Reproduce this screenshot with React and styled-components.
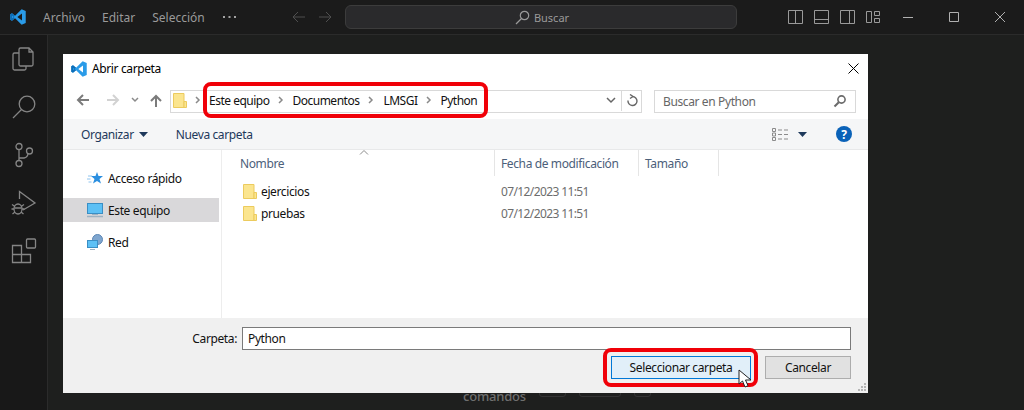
import styled, { createGlobalStyle } from "styled-components";

const GlobalStyle = createGlobalStyle`
  html, body { margin: 0; padding: 0; background: #1e1f1e; }
  * { box-sizing: border-box; }
`;

const Page = styled.div`
  position: relative;
  width: 1024px;
  height: 410px;
  overflow: hidden;
  background: #1e1f1e;
  font-family: "Noto Sans", "Open Sans", sans-serif;
  font-size: 12px;
`;

/* ---------- VS Code behind the dialog ---------- */
const TitleBar = styled.header`
  display: flex;
  align-items: center;
  height: 35px;
  padding-left: 10px;
  background: #1b1b1b;
  border-bottom: 1px solid #2b2b2b;
  color: #a3a3a3;
`;
const MenuList = styled.nav`
  display: flex;
  align-items: center;
  gap: 17px;
  margin-left: 17px;
  width: 249px;
`;
const MenuItem = styled.span`
  font-size: 12px;
  color: #9a9a9a;
`;
const HistoryArrows = styled.div`
  display: flex;
  gap: 14px;
  width: 53px;
  color: #4f4f4f;
`;
const CommandCenter = styled.div`
  display: flex;
  align-items: center;
  justify-content: center;
  gap: 4px;
  width: 392px;
  height: 24px;
  padding-left: 2px;
  background: #2a2a2c;
  border: 1px solid #3c3c3c;
  border-radius: 6px;
  color: #9a9a9a;
  font-size: 11px;
`;
const LayoutIcons = styled.div`
  display: flex;
  gap: 11px;
  margin-left: 51px;
  color: #9a9a9a;
`;
const WindowControls = styled.div`
  display: flex;
  gap: 36px;
  margin-left: 23px;
  color: #b0b0b0;
`;
const Workspace = styled.div`
  display: flex;
  height: 375px;
`;
const ActivityBar = styled.aside`
  display: flex;
  flex-direction: column;
  width: 48px;
  background: #181818;
  border-right: 1px solid #2b2b2b;
  color: #858585;
`;
const ActivityItem = styled.div`
  display: flex;
  align-items: center;
  justify-content: center;
  height: 48px;
`;
const Editor = styled.main`
  flex: 1;
  display: flex;
  padding: 354px 0 0 415px;
`;
const Hint = styled.div`
  display: flex;
  gap: 13px;
  color: #6f6f6f;
  font-size: 13px;
  font-weight: 500;
  line-height: 14px;
  letter-spacing: -0.2px;
`;
const Key = styled.span`
  width: ${(p) => p.$w}px;
  height: 16px;
  margin-top: -8px;
  border: 1px solid #333;
  border-radius: 3px;
`;

/* ---------- dialog ---------- */
const Dialog = styled.section`
  position: absolute;
  left: 63px;
  top: 54px;
  display: flex;
  flex-direction: column;
  width: 805px;
  height: 339px;
  background: #fff;
  color: #000;
  letter-spacing: -0.38px;
`;
const DialogTitle = styled.div`
  display: flex;
  align-items: center;
  gap: 5px;
  height: 29px;
  padding: 0 9px 0 8px;
  font-size: 12px;
`;
const DialogClose = styled.span`
  display: flex;
  margin-left: auto;
`;
const NavRow = styled.div`
  display: flex;
  align-items: center;
  height: 36px;
  padding: 0 0 2px 12px;
`;
const NavButton = styled.span`
  display: flex;
  justify-content: center;
  flex: none;
  width: ${(p) => p.$w}px;
  margin-left: ${(p) => p.$ml || 0}px;
  color: ${(p) => p.$color};
`;
const AddressBox = styled.div`
  display: flex;
  align-items: center;
  flex: none;
  width: 472px;
  height: 23px;
  margin-left: 7px;
  margin-top: 2px;
  border: 1px solid #d9d9d9;
  padding: 0 0 2px 2px;
`;
const Crumb = styled.span`
  font-size: 12px;
  color: #111;
  letter-spacing: -0.5px;
`;
const CrumbSep = styled.span`
  display: flex;
  justify-content: center;
  width: ${(p) => p.$w}px;
  color: #8a8a8a;
`;
const AddressTools = styled.div`
  display: flex;
  align-items: center;
  margin-left: auto;
  height: 100%;
  color: #666;
`;
const RefreshButton = styled.span`
  display: flex;
  align-items: center;
  justify-content: center;
  width: 20px;
  height: 21px;
  margin-left: 5px;
  border-left: 1px solid #d9d9d9;
`;
const SearchBox = styled.div`
  display: flex;
  align-items: center;
  justify-content: space-between;
  width: 202px;
  height: 23px;
  margin-left: 12px;
  margin-top: 2px;
  padding: 0 8px;
  border: 1px solid #d9d9d9;
  color: #666;
  font-size: 12px;
`;
const Toolbar = styled.div`
  display: flex;
  align-items: center;
  height: 31px;
  padding-left: 18px;
  background: #f5f6f7;
  border-bottom: 1px solid #e8e9ea;
  color: #1e395b;
  font-size: 12px;
`;
const ToolButton = styled.span`
  display: flex;
  align-items: center;
  gap: 5px;
  margin-right: 28px;
`;
const ToolbarRight = styled.div`
  display: flex;
  align-items: center;
  margin-left: auto;
  padding-right: 16px;
  gap: 9px;
`;
const HelpBadge = styled.span`
  display: flex;
  align-items: center;
  justify-content: center;
  width: 16px;
  height: 16px;
  margin-left: 20px;
  border-radius: 50%;
  background: #0a62b8;
  color: #fff;
  font-size: 12px;
  font-weight: 700;
`;
const Body = styled.div`
  display: flex;
  height: 168px;
`;
const Sidebar = styled.div`
  display: flex;
  flex-direction: column;
  width: 159px;
  padding-top: 16px;
  border-right: 1px solid #ededed;
  gap: 8px;
`;
const SideItem = styled.div`
  display: flex;
  align-items: center;
  gap: 5px;
  width: 156px;
  height: 24px;
  padding-left: 24px;
  background: ${(p) => (p.$active ? "#d9d8da" : "transparent")};
  color: #111;
  font-size: 12px;
`;
const FileArea = styled.div`
  position: relative;
  flex: 1;
`;
const HeaderRow = styled.div`
  display: grid;
  grid-template-columns: 273px 144px 80px;
  height: 26px;
  margin-bottom: 4px;
`;
const HeaderCell = styled.div`
  display: flex;
  align-items: center;
  padding-left: ${(p) => p.$pad}px;
  border-right: 1px solid #e5e5e5;
  color: #4c607a;
  font-size: 12px;
`;
const SortCaret = styled.svg`
  position: absolute;
  left: 137px;
  top: 0;
`;
const FileRow = styled.div`
  display: grid;
  grid-template-columns: 273px 1fr;
  align-items: center;
  height: 22px;
`;
const FileName = styled.div`
  display: flex;
  align-items: center;
  gap: 4px;
  padding-left: 21px;
  color: #111;
  font-size: 12px;
`;
const FileDate = styled.div`
  padding-left: 6px;
  color: #6d6d6d;
  font-size: 12px;
  letter-spacing: -0.62px;
`;
const Footer = styled.div`
  display: flex;
  flex-direction: column;
  flex: 1;
  padding: 9px 17px 0 0;
  background: #f0f0f0;
`;
const FolderLine = styled.div`
  display: flex;
  align-items: center;
  justify-content: flex-end;
  gap: 5px;
  font-size: 12px;
  color: #111;
`;
const FolderInput = styled.div`
  display: flex;
  align-items: center;
  width: 609px;
  height: 23px;
  padding-left: 5px;
  background: #fff;
  border: 1px solid #7a7a7a;
`;
const ButtonLine = styled.div`
  display: flex;
  justify-content: flex-end;
  gap: 14px;
  margin-top: 6px;
`;
const DialogButton = styled.div`
  display: flex;
  align-items: center;
  justify-content: center;
  width: ${(p) => p.$w}px;
  height: 23px;
  background: ${(p) => (p.$primary ? "#e1eff9" : "#e1e1e1")};
  border: 1px solid ${(p) => (p.$primary ? "#0078d7" : "#adadad")};
  font-size: 12px;
  color: #111;
`;
const Grip = styled.svg`
  position: absolute;
  right: 1px;
  bottom: 1px;
`;
const Highlight = styled.div`
  position: absolute;
  left: ${(p) => p.$x}px;
  top: ${(p) => p.$y}px;
  width: ${(p) => p.$w}px;
  height: ${(p) => p.$h}px;
  border: 4px solid #f00008;
  border-radius: 8px;
`;
const Cursor = styled.svg`
  position: absolute;
  left: 738px;
  top: 369px;
`;

/* ---------- drawings ---------- */
const CodeLogo = ({ size = 16 }) => (
  <svg width={size} height={size} viewBox="0 0 24 24">
    <path
      fill="#2a9be8"
      fillRule="evenodd"
      d="M17.5.4 23.6 3v18l-6.1 2.6L7.6 14 3 17.6.4 16.2V7.8L3 6.4 7.6 10zM18 6.6 11 12l7 5.4z"
    />
    <path fill="#0d6eb8" d="M.4 7.8 3 6.4l4.6 3.6L5.2 12 3 10v4l2.2-2 2.4 2L3 17.6.4 16.2z" />
  </svg>
);
const Line = ({ d, w = 16, h = 16, sw = 1, fill = "none" }) => (
  <svg width={w} height={h} viewBox={`0 0 ${w} ${h}`} fill={fill} stroke="currentColor" strokeWidth={sw}>
    <path d={d} />
  </svg>
);
const Activity = ({ children }) => (
  <ActivityItem>
    <svg width="26" height="26" viewBox="0 0 26 26" fill="none" stroke="currentColor" strokeWidth="1.3">
      {children}
    </svg>
  </ActivityItem>
);
const FolderIcon = ({ w = 14, h = 16 }) => (
  <svg width={w} height={h} viewBox="0 0 14 16">
    <path d="M.5 1.5h10.5v14H.5z" fill="#fbe58f" stroke="#eccb5e" />
    <path d="M11 9.5h2.500v6H11z" fill="#fbe58f" stroke="#eccb5e" />
  </svg>
);
const SearchGlass = () => (
  <svg width="14" height="14" viewBox="0 0 14 14" fill="none" stroke="#6a6a6a">
    <circle cx="8.5" cy="5.5" r="3.6" strokeWidth="1.6" />
    <path d="M5.8 8.2 1.5 12.5" strokeWidth="2" />
  </svg>
);
const Sep = ({ w }) => (
  <CrumbSep $w={w}>
    <svg width="6" height="8" viewBox="0 0 6 8" fill="none" stroke="currentColor" strokeWidth="1.5">
      <path d="m1 1 3 3-3 3" />
    </svg>
  </CrumbSep>
);
const Caret = ({ color = "#1e395b" }) => (
  <svg width="9" height="5" viewBox="0 0 9 5">
    <path d="M0 0h9L4.5 5z" fill={color} />
  </svg>
);

export default function App() {
  return (
    <Page>
      <GlobalStyle />
      <TitleBar>
        <CodeLogo />
        <MenuList>
          <MenuItem>Archivo</MenuItem>
          <MenuItem>Editar</MenuItem>
          <MenuItem>Selección</MenuItem>
          <Line w={14} h={4} sw={2} d="M1 2h2m3.500 0h2m3.500 0h2" />
        </MenuList>
        <HistoryArrows>
          <Line w={13} h={12} d="M13 6H1m5-5L1 6l5 5" />
          <Line w={13} h={12} d="M0 6h12M7 1l5 5-5 5" />
        </HistoryArrows>
        <CommandCenter>
          <svg width="15" height="15" viewBox="0 0 15 15" fill="none" stroke="currentColor" strokeWidth="1.2">
            <circle cx="9.500" cy="5.500" r="4.200" />
            <path d="M6.500 8.500 1 14" />
          </svg>
          Buscar
        </CommandCenter>
        <LayoutIcons>
          <Line w={15} h={14} d="M.5.5h14v13H.5zM7.500.5v13" />
          <Line w={15} h={14} d="M.5.5h14v13H.5zM.5 9.500h14" />
          <Line w={15} h={14} d="M.5.5h14v13H.5zM9.500.5v13" />
          <Line w={14} h={14} d="M.5 1.500h5v11h-5zM8.500 1.500h5v4h-5zM8.500 8.500h5v4h-5z" />
        </LayoutIcons>
        <WindowControls>
          <Line w={10} h={10} d="M0 5.500h10" />
          <Line w={10} h={10} d="M.5.5h9v9h-9z" />
          <Line w={10} h={10} d="m0 0 10 10M10 0 0 10" />
        </WindowControls>
      </TitleBar>
      <Workspace>
        <ActivityBar>
          <Activity>
            <path d="M8 7H3.500A1.500 1.500 0 0 0 2 8.500v14A1.500 1.500 0 0 0 3.500 24h10a1.500 1.500 0 0 0 1.500-1.500V20" />
            <path d="M9.500 2H18l4 4v12.500a1.500 1.500 0 0 1-1.500 1.500h-11A1.500 1.500 0 0 1 8 18.500v-15A1.500 1.500 0 0 1 9.500 2zM18 2v4h4" />
          </Activity>
          <Activity>
            <circle cx="16" cy="10" r="7.800" />
            <path d="M10.500 15.500 2 24" />
          </Activity>
          <Activity>
            <circle cx="8" cy="4.500" r="3" />
            <circle cx="8" cy="21.500" r="3" />
            <circle cx="18.500" cy="9" r="3" />
            <path d="M8 7.500v11M8 16h5a5 5 0 0 0 4-4.500" />
          </Activity>
          <Activity>
            <path d="M8.500 9V1.500L24 13 12 20" />
            <ellipse cx="7" cy="19" rx="4" ry="5" />
            <path d="M1 14.500l3 2M13 14.500l-3 2M0.500 19h2.500M13.500 19H11M1.500 24l2.500-2M12.500 24 10 22M3.500 18h7" />
          </Activity>
          <Activity>
            <path d="M1.500 7.500h9v9h-9zM1.500 16.500h9v8h-9zM10.500 16.500h9v8h-9z" />
            <rect x="15.500" y="1" width="9" height="9" rx="1" />
          </Activity>
        </ActivityBar>
        <Editor>
          <Hint>
            comandos
            <Key $w={27} />
            <Key $w={42} />
            <Key $w={17} />
          </Hint>
        </Editor>
      </Workspace>

      <Dialog>
        <DialogTitle>
          <CodeLogo />
          Abrir carpeta
          <DialogClose>
            <svg width="11" height="11" viewBox="0 0 11 11" fill="none" stroke="#000">
              <path d="m.5.5 10 10m0-10-10 10" />
            </svg>
          </DialogClose>
        </DialogTitle>
        <NavRow>
          <NavButton $w={14} $color="#7b7b7b">
            <Line w={13} h={12} sw={2} d="M13 6H2m5-5L2 6l5 5" />
          </NavButton>
          <NavButton $w={14} $ml={17} $color="#d2d2d2">
            <Line w={13} h={12} sw={2} d="M0 6h11M6 1l5 5-5 5" />
          </NavButton>
          <NavButton $w={10} $ml={10} $color="#8a8a8a">
            <Line w={8} h={6} sw={1.5} d="m1 1 3 3 3-3" />
          </NavButton>
          <NavButton $w={14} $ml={9} $color="#7b7b7b">
            <Line w={12} h={13} sw={2} d="M6 13V2M1 7l5-5 5 5" />
          </NavButton>
          <AddressBox>
            <FolderIcon />
            <Sep w={22} />
            <Crumb>Este equipo</Crumb>
            <Sep w={23} />
            <Crumb>Documentos</Crumb>
            <Sep w={24} />
            <Crumb>LMSGI</Crumb>
            <Sep w={23} />
            <Crumb>Python</Crumb>
            <AddressTools>
              <Line w={10} h={7} sw={1.5} d="m1 1 4 4 4-4" />
              <RefreshButton>
                <Line w={12} h={13} sw={1.4} d="M6.500 2.500A4.500 4.500 0 1 1 2 6.500M4 .5l3 2-3 2" />
              </RefreshButton>
            </AddressTools>
          </AddressBox>
          <SearchBox>
            Buscar en Python
            <SearchGlass />
          </SearchBox>
        </NavRow>
        <Toolbar>
          <ToolButton>
            Organizar
            <Caret />
          </ToolButton>
          <ToolButton>Nueva carpeta</ToolButton>
          <ToolbarRight>
            <svg width="17" height="13" viewBox="0 0 17 13" fill="none" stroke="#8b8b8b">
              <path d="M.5.5h3v3h-3zM.5 5h3v3h-3zM.5 9.500h3v3h-3zM6 2h4m2 0h4M6 6.500h4m2 0h4M6 11h4m2 0h4" />
            </svg>
            <Caret />
            <HelpBadge>?</HelpBadge>
          </ToolbarRight>
        </Toolbar>
        <Body>
          <Sidebar>
            <SideItem>
              <svg width="16" height="16" viewBox="0 0 16 16">
                <path d="M10 2l1.500 4H16l-3.500 3 1.500 4.500L10 11l-4 2.500L7.500 9 4 6h4.500z" fill="#2b8fe0" />
                <path d="M1 6h4M0 9h3.500M1.500 12h3" stroke="#8ec4ef" />
              </svg>
              Acceso rápido
            </SideItem>
            <SideItem $active>
              <svg width="16" height="16" viewBox="0 0 16 16">
                <rect x="0.500" y="1.500" width="15" height="10" fill="#5cc0f5" stroke="#3a8ec4" />
                <path d="M0 14.500h16" stroke="#9db2c2" strokeWidth="1.5" />
                <path d="M5 12.500h6" stroke="#9db2c2" />
              </svg>
              Este equipo
            </SideItem>
            <SideItem>
              <svg width="16" height="16" viewBox="0 0 16 16">
                <circle cx="10.500" cy="5.500" r="5" fill="#7fa6cf" stroke="#5b86b5" />
                <rect x="0.500" y="6.500" width="10" height="7" fill="#5cc0f5" stroke="#3a8ec4" />
                <path d="M3 15.500h5" stroke="#9db2c2" />
              </svg>
              Red
            </SideItem>
          </Sidebar>
          <FileArea>
            <SortCaret width="10" height="5" viewBox="0 0 10 5" fill="none" stroke="#8a8a8a">
              <path d="m1 4.500 4-4 4 4" />
            </SortCaret>
            <HeaderRow>
              <HeaderCell $pad={18}>Nombre</HeaderCell>
              <HeaderCell $pad={6}>Fecha de modificación</HeaderCell>
              <HeaderCell $pad={6}>Tamaño</HeaderCell>
            </HeaderRow>
            <FileRow>
              <FileName>
                <FolderIcon />
                ejercicios
              </FileName>
              <FileDate>07/12/2023 11:51</FileDate>
            </FileRow>
            <FileRow>
              <FileName>
                <FolderIcon />
                pruebas
              </FileName>
              <FileDate>07/12/2023 11:51</FileDate>
            </FileRow>
          </FileArea>
        </Body>
        <Footer>
          <FolderLine>
            Carpeta:
            <FolderInput>Python</FolderInput>
          </FolderLine>
          <ButtonLine>
            <DialogButton $primary $w={140}>Seleccionar carpeta</DialogButton>
            <DialogButton $w={86}>Cancelar</DialogButton>
          </ButtonLine>
        </Footer>
        <Grip width="9" height="9" viewBox="0 0 9 9" fill="#b5b5b5">
          <path d="M6 0h2v2H6zM3 3h2v2H3zM6 3h2v2H6zM0 6h2v2H0zM3 6h2v2H3zM6 6h2v2H6z" />
        </Grip>
      </Dialog>

      <Highlight $x={203} $y={82} $w={285} $h={36} />
      <Highlight $x={603} $y={348} $w={155} $h={39} />
      <Cursor width="15" height="20" viewBox="0 0 15 20">
        <path d="M1 1v14l3.500-3 2.500 6 3-1.300-2.500-5.700H13z" fill="#fff" stroke="#222" />
      </Cursor>
    </Page>
  );
}
